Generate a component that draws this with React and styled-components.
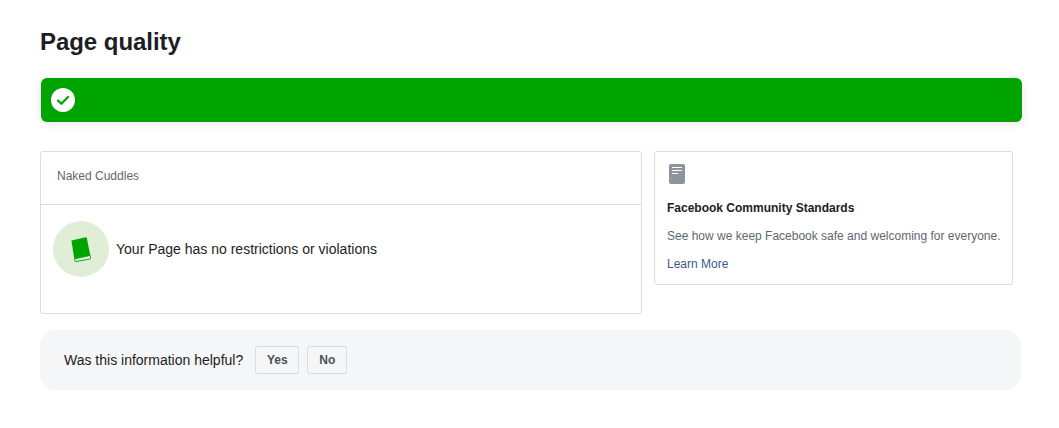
import styled, { createGlobalStyle } from "styled-components";

const GlobalStyle = createGlobalStyle`
  html, body {
    margin: 0;
    padding: 0;
    background: #fff;
    font-family: "Liberation Sans", Arial, sans-serif;
  }
`;

export default function App() {
  return (
    <Page>
      <GlobalStyle />
      <Title>Page quality</Title>
      <Banner>
        <svg width="24" height="24" viewBox="0 0 24 24">
          <circle cx="12" cy="12" r="12" fill="#fff" />
          <path d="M7 12.6l3.4 3.2L17 9" fill="none" stroke="#00a400" strokeWidth="2.2" strokeLinecap="round" strokeLinejoin="round" />
        </svg>
      </Banner>
      <Columns>
        <MainCard>
          <CardHeader>Naked Cuddles</CardHeader>
          <CardBody>
            <IconCircle>
              <svg width="20" height="25" viewBox="0 0 20 25">
                <path d="M0.4 3.6L14.6 0.2a1 1 0 0 1 1.2 0.8L19.4 19 4.6 22.2 3.4 22.6z" fill="#00a400" />
                <path d="M3.6 21.8L19.2 18.4l0.5 2.6a0.8 0.8 0 0 1-0.6 1L5 24.6a1.4 1.4 0 0 1-1.4-1z" fill="#e1eed7" stroke="#00a400" strokeWidth="0.9" />
              </svg>
            </IconCircle>
            <Status>Your Page has no restrictions or violations</Status>
          </CardBody>
        </MainCard>
        <SideCard>
          <DocIcon width="16" height="20" viewBox="0 0 16 20">
            <rect width="16" height="20" rx="2" fill="#8d949e" />
            <path d="M3 3.5h10M3 6.5h10M3 9.5h6" stroke="#fff" strokeWidth="1" />
          </DocIcon>
          <SideTitle>Facebook Community Standards</SideTitle>
          <SideText>See how we keep Facebook safe and welcoming for everyone.</SideText>
          <SideLink href="#">Learn More</SideLink>
        </SideCard>
      </Columns>
      <Feedback>
        <FeedbackLabel>Was this information helpful?</FeedbackLabel>
        <FeedbackButton $width={44}>Yes</FeedbackButton>
        <FeedbackButton $width={40}>No</FeedbackButton>
      </Feedback>
    </Page>
  );
}

const Page = styled.div`
  width: 1059px;
  height: 428px;
  box-sizing: border-box;
  padding: 28px 0 0 40px;
  overflow: hidden;
  display: flex;
  flex-direction: column;
`;
const Title = styled.h1`
  margin: 0;
  font-size: 24px;
  line-height: 28px;
  font-weight: 700;
  color: #1c1e21;
  letter-spacing: -0.05px;
`;
const Banner = styled.div`
  width: 981px;
  height: 44px;
  margin: 22px 0 0 1px;
  padding-left: 10px;
  box-sizing: border-box;
  display: flex;
  align-items: center;
  background: #00a400;
  border-radius: 6px;
  box-shadow: 0 2px 10px rgba(0, 0, 0, 0.1);
`;
const Columns = styled.div`
  display: flex;
  align-items: flex-start;
  gap: 12px;
  margin-top: 29px;
`;
const MainCard = styled.section`
  width: 602px;
  height: 163px;
  box-sizing: border-box;
  border: 1px solid #dadde1;
  border-radius: 3px;
  background: #fff;
`;
const CardHeader = styled.div`
  height: 53px;
  box-sizing: border-box;
  padding: 0 0 4px 16px;
  display: flex;
  align-items: center;
  border-bottom: 1px solid #dadde1;
  font-size: 12px;
  color: #606770;
`;
const CardBody = styled.div`
  display: flex;
  align-items: center;
  gap: 7px;
  padding: 16px 0 0 12px;
`;
const IconCircle = styled.div`
  width: 56px;
  height: 56px;
  border-radius: 50%;
  background: #e1eed7;
  display: flex;
  align-items: center;
  justify-content: center;
`;
const Status = styled.span`
  font-size: 14px;
  color: #1c1e21;
`;
const SideCard = styled.aside`
  width: 359px;
  height: 134px;
  box-sizing: border-box;
  padding: 12px 12px 0;
  border: 1px solid #dadde1;
  border-radius: 3px;
  display: flex;
  flex-direction: column;
  align-items: flex-start;
  background: #fff;
`;
const DocIcon = styled.svg`
  margin-left: 2px;
`;
const SideTitle = styled.div`
  margin-top: 17px;
  font-size: 12px;
  line-height: 14px;
  font-weight: 700;
  color: #1c1e21;
`;
const SideText = styled.div`
  margin-top: 14px;
  font-size: 12px;
  line-height: 14px;
  color: #606770;
  white-space: nowrap;
`;
const SideLink = styled.a`
  margin-top: 14px;
  font-size: 12px;
  line-height: 14px;
  color: #3b5a8c;
  text-decoration: none;
`;
const Feedback = styled.div`
  width: 981px;
  height: 60px;
  margin-top: 16px;
  box-sizing: border-box;
  padding-left: 24px;
  display: flex;
  align-items: center;
  gap: 8px;
  background: #f5f6f7;
  border-radius: 16px;
`;
const FeedbackLabel = styled.span`
  margin-right: 4px;
  font-size: 14px;
  color: #1c1e21;
`;
const FeedbackButton = styled.button`
  width: ${(p) => p.$width}px;
  height: 28px;
  padding: 0;
  box-sizing: border-box;
  border: 1px solid #dadde1;
  border-radius: 2px;
  background: #f5f6f7;
  font-family: inherit;
  font-size: 12px;
  font-weight: 700;
  color: #4b4f56;
`;
